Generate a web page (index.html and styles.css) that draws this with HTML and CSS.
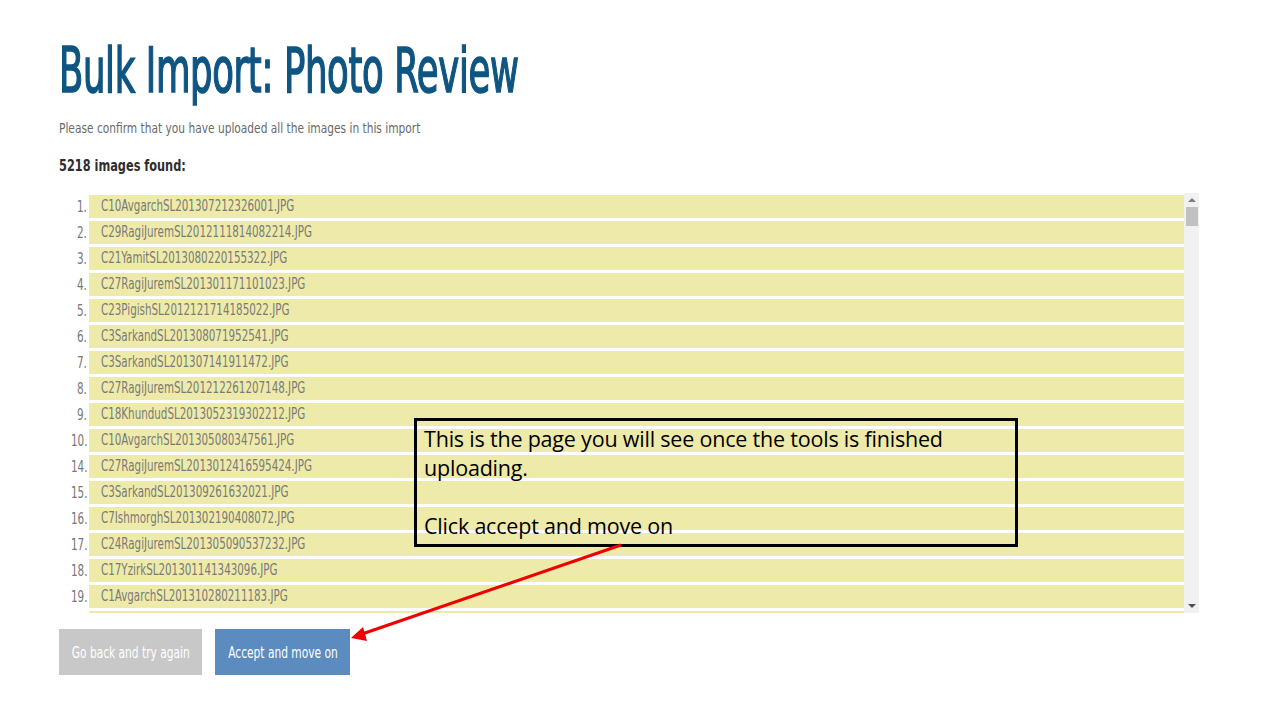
FILE: index.html
```html
<!DOCTYPE html>
<html>
<head>
<meta charset="utf-8">
<link rel="stylesheet" href="styles.css">
</head>
<body>
<div class="page">
  <h1 class="title">Bulk Import: Photo Review</h1>
  <p class="lead"><span class="narrow">Please confirm that you have uploaded all the images in this import</span></p>
  <p class="count"><span class="narrow">5218 images found:</span></p>
  <div class="list-wrap">
    <div class="list">
      <div class="row"><span class="num"><span class="n">1.</span></span><span class="name"><span class="t">C10AvgarchSL201307212326001.JPG</span></span></div>
      <div class="row"><span class="num"><span class="n">2.</span></span><span class="name"><span class="t">C29RagiJuremSL2012111814082214.JPG</span></span></div>
      <div class="row"><span class="num"><span class="n">3.</span></span><span class="name"><span class="t">C21YamitSL2013080220155322.JPG</span></span></div>
      <div class="row"><span class="num"><span class="n">4.</span></span><span class="name"><span class="t">C27RagiJuremSL201301171101023.JPG</span></span></div>
      <div class="row"><span class="num"><span class="n">5.</span></span><span class="name"><span class="t">C23PigishSL2012121714185022.JPG</span></span></div>
      <div class="row"><span class="num"><span class="n">6.</span></span><span class="name"><span class="t">C3SarkandSL201308071952541.JPG</span></span></div>
      <div class="row"><span class="num"><span class="n">7.</span></span><span class="name"><span class="t">C3SarkandSL201307141911472.JPG</span></span></div>
      <div class="row"><span class="num"><span class="n">8.</span></span><span class="name"><span class="t">C27RagiJuremSL201212261207148.JPG</span></span></div>
      <div class="row"><span class="num"><span class="n">9.</span></span><span class="name"><span class="t">C18KhundudSL2013052319302212.JPG</span></span></div>
      <div class="row"><span class="num"><span class="n">10.</span></span><span class="name"><span class="t">C10AvgarchSL201305080347561.JPG</span></span></div>
      <div class="row"><span class="num"><span class="n">14.</span></span><span class="name"><span class="t">C27RagiJuremSL2013012416595424.JPG</span></span></div>
      <div class="row"><span class="num"><span class="n">15.</span></span><span class="name"><span class="t">C3SarkandSL201309261632021.JPG</span></span></div>
      <div class="row"><span class="num"><span class="n">16.</span></span><span class="name"><span class="t">C7IshmorghSL201302190408072.JPG</span></span></div>
      <div class="row"><span class="num"><span class="n">17.</span></span><span class="name"><span class="t">C24RagiJuremSL201305090537232.JPG</span></span></div>
      <div class="row"><span class="num"><span class="n">18.</span></span><span class="name"><span class="t">C17YzirkSL201301141343096.JPG</span></span></div>
      <div class="row"><span class="num"><span class="n">19.</span></span><span class="name"><span class="t">C1AvgarchSL201310280211183.JPG</span></span></div>
      <div class="row"><span class="num"></span><span class="name"></span></div>
    </div>
    <div class="scrollbar">
      <span class="arrow-up"></span>
      <span class="thumb"></span>
      <span class="track"></span>
      <span class="arrow-down"></span>
    </div>
  </div>
  <div class="actions">
    <button class="btn btn-grey"><span class="bt">Go back and try again</span></button>
    <button class="btn btn-blue"><span class="bt">Accept and move on</span></button>
  </div>
</div>
<div class="callout">
  <p>This is the page you will see once the tools is finished uploading.</p>
  <p class="gap">Click accept and move on</p>
</div>
<svg class="arrow" width="1280" height="720" viewBox="0 0 1280 720">
  <line x1="621" y1="545" x2="362" y2="634" stroke="#f00000" stroke-width="3"/>
  <polygon points="351,638 363,627 367,641" fill="#f00000"/>
</svg>
</body>
</html>
```
FILE: styles.css
```css
html, body {
  margin: 0;
  padding: 0;
  background: #ffffff;
}
body {
  width: 1280px;
  height: 720px;
  overflow: hidden;
  position: relative;
}
.page {
  padding: 38px 0 0 59px;
  font-family: "DejaVu Sans Condensed", "DejaVu Sans", sans-serif;
  font-stretch: condensed;
}
.title {
  margin: 0;
  display: inline-block;
  font-size: 62px;
  font-weight: normal;
  line-height: 66px;
  color: #0f5582;
  -webkit-text-stroke: 1.6px #0f5582;
  letter-spacing: -0.5px;
  transform: scaleX(0.635);
  transform-origin: left center;
  white-space: nowrap;
}
.narrow {
  display: inline-block;
  white-space: nowrap;
  transform-origin: left center;
}
.lead {
  margin: 14px 0 0;
  font-size: 14.5px;
  line-height: 20px;
  color: #6a6a6a;
}
.lead .narrow {
  transform: scaleX(0.815);
}
.count {
  margin: 18px 0 0;
  font-size: 15px;
  font-weight: bold;
  line-height: 20px;
  color: #2e2e2e;
}
.count .narrow {
  transform: scaleX(0.84);
}
.list-wrap {
  margin-top: 17px;
  width: 1140px;
  height: 420px;
  display: flex;
  overflow: hidden;
}
.list {
  flex: 1;
  padding-top: 2px;
  display: flex;
  flex-direction: column;
  gap: 3px;
}
.row {
  display: flex;
  height: 23px;
  align-items: center;
  flex-shrink: 0;
}
.num {
  width: 28px;
  padding-right: 2px;
  text-align: right;
  font-size: 15px;
  color: #777;
  white-space: nowrap;
}
.n {
  display: inline-block;
  transform: scaleX(0.77);
  transform-origin: right center;
}
.name {
  flex: 1;
  height: 23px;
  line-height: 23px;
  background: #eeeaa9;
  padding-left: 12px;
  font-size: 15px;
  color: #7a7a7a;
  white-space: nowrap;
}
.t {
  display: inline-block;
  transform: scaleX(0.765);
  transform-origin: left center;
}
.scrollbar {
  width: 15px;
  background: #f1f1f1;
  display: flex;
  flex-direction: column;
  align-items: center;
}
.arrow-up, .arrow-down {
  width: 0;
  height: 0;
  border-left: 4px solid transparent;
  border-right: 4px solid transparent;
  margin: 5px 0;
}
.arrow-up {
  border-bottom: 4px solid #7d7d7d;
}
.arrow-down {
  border-top: 4px solid #505050;
}
.thumb {
  width: 12px;
  height: 19px;
  background: #c1c1c1;
}
.track {
  flex: 1;
}
.actions {
  margin-top: 16px;
  display: flex;
  gap: 13px;
}
.btn {
  height: 46px;
  border: none;
  padding: 0;
  display: flex;
  justify-content: center;
  align-items: center;
  font-family: inherit;
  font-stretch: condensed;
  font-size: 16px;
  color: #fff;
  white-space: nowrap;
}
.bt {
  display: block;
  flex-shrink: 0;
  transform: scaleX(0.74);
  transform-origin: center center;
}
.btn-grey {
  width: 143px;
  background: #c8c8c8;
}
.btn-blue {
  width: 135px;
  background: #5b8bbf;
}
.callout {
  position: absolute;
  left: 414px;
  top: 418px;
  width: 604px;
  height: 129px;
  border: 3px solid #000;
  padding: 0 0 0 7px;
  box-sizing: border-box;
  font-family: "Open Sans", "Noto Sans", sans-serif;
  font-size: 21.5px;
  line-height: 29px;
  color: #000;
}
.callout p {
  margin: 3px 0 0;
  width: 570px;
  letter-spacing: -0.2px;
}
.callout p.gap {
  margin-top: 29px;
}
.arrow {
  position: absolute;
  left: 0;
  top: 0;
  pointer-events: none;
}
```
